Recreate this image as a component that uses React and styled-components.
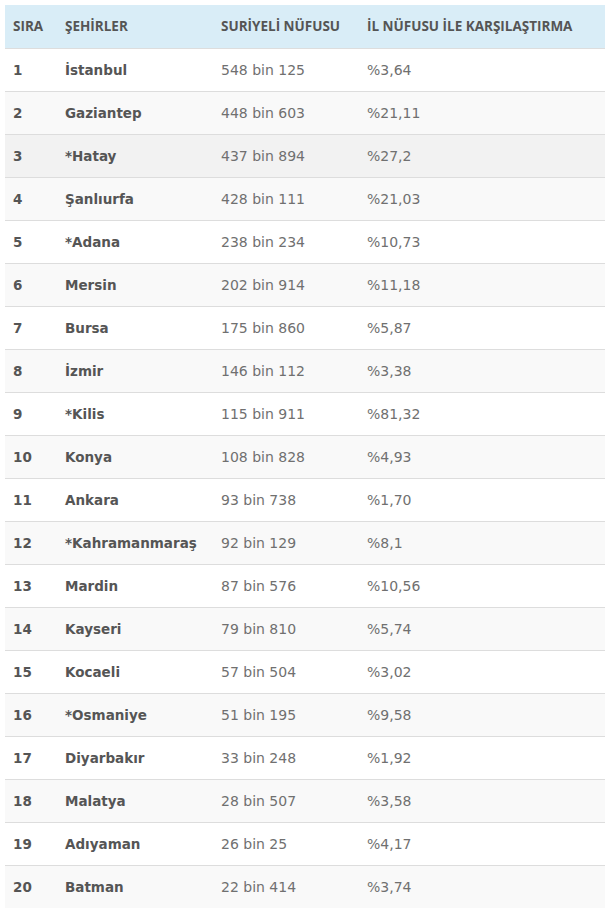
import React from "react"
import styled, {createGlobalStyle} from "styled-components"

const GlobalStyle = createGlobalStyle`
    *{
        margin: 0;
        padding: 0;
        box-sizing: border-box;
    }
    body{
        background: #ffffff;
        padding: 5px 0 0 5px;
        font-family: "DejaVu Sans", sans-serif;
        color: #555555;
    }
`;

const Tablo = styled.table`
    width: 600px;
    border-collapse: collapse;
`;

const Baslik = styled.th`
    height: 43px;
    padding: 0 8px;
    text-align: left;
    vertical-align: middle;
    background: #d9edf7;
    border-bottom: 1px solid #dddddd;
    font-family: "Open Sans", sans-serif;
    font-weight: 700;
    font-size: 13.5px;
    color: #555555;
    white-space: nowrap;
    width: ${props => props.$w || "auto"};
`;

const Satir = styled.tr`
    background: ${props => props.$hover ? "#f2f2f2" : props.$cift ? "#f9f9f9" : "#ffffff"};
`;

const Hucre = styled.td`
    height: 43px;
    padding: 0 8px;
    vertical-align: middle;
    border-bottom: 1px solid #dddddd;
    font-size: ${props => props.$kalin ? "13.5px" : "14px"};
    font-weight: ${props => props.$kalin ? 700 : 400};
    color: ${props => props.$kalin ? "#555555" : "#707070"};
    white-space: nowrap;
`;

const veri = [
    ["İstanbul", "548 bin 125", "%3,64"],
    ["Gaziantep", "448 bin 603", "%21,11"],
    ["*Hatay", "437 bin 894", "%27,2"],
    ["Şanlıurfa", "428 bin 111", "%21,03"],
    ["*Adana", "238 bin 234", "%10,73"],
    ["Mersin", "202 bin 914", "%11,18"],
    ["Bursa", "175 bin 860", "%5,87"],
    ["İzmir", "146 bin 112", "%3,38"],
    ["*Kilis", "115 bin 911", "%81,32"],
    ["Konya", "108 bin 828", "%4,93"],
    ["Ankara", "93 bin 738", "%1,70"],
    ["*Kahramanmaraş", "92 bin 129", "%8,1"],
    ["Mardin", "87 bin 576", "%10,56"],
    ["Kayseri", "79 bin 810", "%5,74"],
    ["Kocaeli", "57 bin 504", "%3,02"],
    ["*Osmaniye", "51 bin 195", "%9,58"],
    ["Diyarbakır", "33 bin 248", "%1,92"],
    ["Malatya", "28 bin 507", "%3,58"],
    ["Adıyaman", "26 bin 25", "%4,17"],
    ["Batman", "22 bin 414", "%3,74"],
]

export default function App(){
    return(
        <>
            <GlobalStyle />
            <Tablo>
                <thead>
                    <tr>
                        <Baslik $w="52px">SIRA</Baslik>
                        <Baslik $w="156px">ŞEHİRLER</Baslik>
                        <Baslik $w="146px">SURİYELİ NÜFUSU</Baslik>
                        <Baslik>İL NÜFUSU İLE KARŞILAŞTIRMA</Baslik>
                    </tr>
                </thead>
                <tbody>
                    {veri.map((s, i) => (
                        <Satir key={i} $cift={i % 2 === 1} $hover={i === 2}>
                            <Hucre $kalin>{i + 1}</Hucre>
                            <Hucre $kalin>{s[0]}</Hucre>
                            <Hucre>{s[1]}</Hucre>
                            <Hucre>{s[2]}</Hucre>
                        </Satir>
                    ))}
                </tbody>
            </Tablo>
        </>
    )
}
